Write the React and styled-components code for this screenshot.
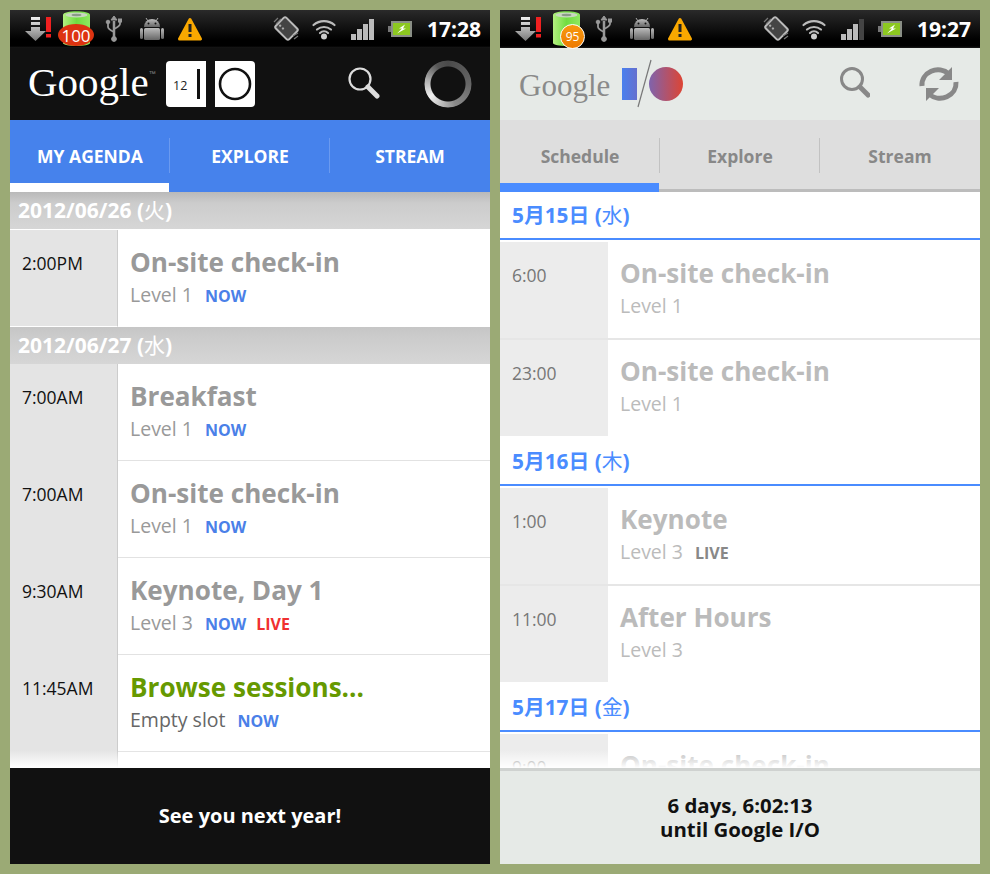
import React from 'react';
import styled, { createGlobalStyle } from 'styled-components';

const Global = createGlobalStyle`
  html, body { margin: 0; padding: 0; background: #9baa75; }
  body { font-family: "Open Sans", "Noto Sans CJK JP", sans-serif; }
`;

const Frame = styled.div`
  display: flex;
  gap: 10px;
  padding: 10px;
  width: 990px;
  height: 874px;
  box-sizing: border-box;
  overflow: hidden;
`;

const Phone = styled.div`
  width: 480px;
  height: 854px;
  flex: none;
  display: flex;
  flex-direction: column;
  background: #fff;
`;

const StatusBar = styled.div`
  height: 38px;
  flex: none;
  display: flex;
  align-items: center;
  padding: 0 9px 0 11px;
  background: linear-gradient(#2a2a2a 0, #1c1c1c 10px, #000 30px, #000 36px, #1a1a1a 38px);
`;

const IconGroup = styled.div`
  display: flex;
  margin-left: ${(p) => (p.$right ? 'auto' : '0')};
`;

const Icon = styled.svg`
  width: 38px;
  height: 38px;
  flex: none;
  display: block;
`;

const BatterySlot = styled.div`
  position: relative;
  width: 38px;
  height: 38px;
  flex: none;
`;

const BatteryBadge = styled.div`
  position: absolute;
  display: flex;
  align-items: center;
  justify-content: center;
  font-weight: 400;
  color: #fff;
  box-sizing: border-box;
  ${(p) =>
    p.$big
      ? `left: -1px; top: 14px; width: 36px; height: 22px; border-radius: 50%; background: #dd3311; font-size: 17px;`
      : `left: 11px; top: 14px; width: 25px; height: 25px; border-radius: 50%; background: linear-gradient(#f79a10, #ee7a00); border: 1.5px solid #fff; font-size: 12px;`}
`;

const Clock = styled.div`
  width: 54px;
  margin-left: 8px;
  font-size: 21px;
  font-weight: 700;
  color: #fff;
  white-space: nowrap;
  text-align: right;
`;

const ActionBar = styled.div`
  height: 72px;
  flex: none;
  display: flex;
  align-items: center;
  padding: 0 18px 0 ${(p) => (p.$light ? '19px' : '18px')};
  background: ${(p) => (p.$light ? '#e6eae7' : '#111')};
`;

const Wordmark = styled.div`
  font-family: "Liberation Serif", serif;
  font-size: ${(p) => (p.$light ? '31px' : '41px')};
  line-height: 1;
  color: ${(p) => (p.$light ? '#8a8a8a' : '#fff')};
  margin-right: ${(p) => (p.$light ? '10px' : '0')};
  position: relative;
  top: ${(p) => (p.$light ? '1px' : '-2px')};
`;

const Trademark = styled.span`
  font-family: "Liberation Sans", sans-serif;
  font-size: 7px;
  color: #888;
  vertical-align: 20px;
  margin-right: 7px;
`;

const ActionIcons = styled.div`
  margin-left: auto;
  display: flex;
  align-items: flex-start;
  gap: 68px;
`;

const ActionIcon = styled.svg`
  width: 40px;
  height: 48px;
  display: block;
  flex: none;
`;

const Spinner = styled.div`
  width: 48px;
  height: 48px;
  margin-left: -24px;
  border-radius: 50%;
  background: conic-gradient(#4a4a4a 0deg, #666 90deg, #8a8a8a 160deg, #f0f0f0 235deg, #b0b0b0 280deg, #555 330deg, #4a4a4a 360deg);
  -webkit-mask: radial-gradient(circle, transparent 17px, #000 18px, #000 23px, transparent 24px);
  mask: radial-gradient(circle, transparent 17px, #000 18px, #000 23px, transparent 24px);
`;

const RefreshBox = styled.svg`
  width: 48px;
  height: 48px;
  margin-left: -24px;
  display: block;
  flex: none;
`;

const Tabs = styled.div`
  height: 72px;
  flex: none;
  display: flex;
  box-sizing: border-box;
  background: ${(p) => (p.$light ? '#dedede' : '#4682ec')};
  ${(p) => (p.$light ? 'border-bottom: 3px solid #bcbcbc;' : '')}
`;

const Tab = styled.div`
  position: relative;
  flex: 1 1 0;
  display: flex;
  align-items: flex-start;
  justify-content: center;
  padding-top: 24px;
  font-size: 17.500px;
  line-height: 24px;
  font-weight: 700;
  color: ${(p) => (p.$light ? '#888' : '#fff')};
  &:not(:last-child)::after {
    content: '';
    position: absolute;
    right: 0;
    top: 18px;
    height: 35px;
    width: 1px;
    background: ${(p) => (p.$light ? '#c2c2c2' : '#6a9af0')};
  }
`;

const TabMarker = styled.div`
  position: absolute;
  left: 0;
  right: 1px;
  bottom: ${(p) => (p.$light ? '-3px' : '0')};
  height: 9px;
  background: ${(p) => (p.$light ? '#4a8cff' : '#fff')};
`;

const List = styled.div`
  position: relative;
  flex: 1 1 0;
  min-height: 0;
  overflow: hidden;
  background: #fff;
`;

const Fade = styled.div`
  position: absolute;
  left: 0;
  right: 0;
  bottom: 0;
  height: 18px;
  background: linear-gradient(rgba(255, 255, 255, 0), #fff);
`;

const DayBar = styled.div`
  height: 37px;
  box-sizing: border-box;
  padding-left: 8px;
  font-size: 21px;
  line-height: 37px;
  font-weight: 700;
  color: #fff;
  background: linear-gradient(${(p) => (p.$top ? '#b9b9b9' : '#c6c6c6')}, #cccccc 30%, #d6d6d6);
`;

const DayRule = styled.div`
  height: 48px;
  box-sizing: border-box;
  padding-left: 12px;
  font-size: 20.800px;
  line-height: 47px;
  font-weight: 700;
  color: #4a8cff;
  border-bottom: 2px solid #4a8cff;
  margin-bottom: 2px;
`;

const Kanji = styled.span`
  font-weight: 400;
`;

const Row = styled.div`
  display: flex;
  height: ${(p) => (p.$light ? '98px' : '97px')};
  ${(p) => (p.$first ? 'margin-top: 1px;' : '')}
`;

const TimeCell = styled.div`
  box-sizing: border-box;
  flex: none;
  width: 108px;
  padding: 21px 0 0 12px;
  font-size: 17.500px;
  line-height: 24px;
  color: ${(p) => (p.$light ? '#777' : '#111')};
  background: ${(p) => (p.$light ? '#ececec' : '#e4e4e4')};
  ${(p) => (p.$light ? 'border-bottom: 2px solid #e6e6e6;' : 'border-right: 1px solid #ccc;')}
  ${(p) => (p.$light && p.$last ? 'border-bottom-color: #fff;' : '')}
  ${(p) => (p.$first ? 'border-bottom: 1px solid #fff;' : '')}
`;

const Body = styled.div`
  flex: 1 1 0;
  box-sizing: border-box;
  padding: ${(p) => (p.$light ? '13px' : '14px')} 0 0 12px;
  border-bottom: ${(p) => (p.$light ? '2px' : '1px')} solid ${(p) => (p.$plain ? '#fff' : p.$light ? '#e6e6e6' : '#e2e2e2')};
`;

const Title = styled.div`
  font-size: 26.100px;
  line-height: 36px;
  font-weight: 700;
  white-space: nowrap;
  color: ${(p) => p.$color};
`;

const Meta = styled.div`
  display: flex;
  align-items: baseline;
  gap: 12px;
  font-size: 19.500px;
  line-height: 30px;
  color: ${(p) => p.$color};
`;

const Flag = styled.span`
  font-size: 16px;
  font-weight: 700;
  color: ${(p) => p.$color};
  & + & { margin-left: -2px; }
`;

const Footer = styled.div`
  height: 96px;
  flex: none;
  box-sizing: border-box;
  display: flex;
  align-items: center;
  justify-content: center;
  text-align: center;
  font-size: ${(p) => (p.$light ? '20.400px' : '20px')};
  line-height: 24px;
  font-weight: 700;
  color: ${(p) => (p.$light ? '#111' : '#fff')};
  background: ${(p) => (p.$light ? '#e6eae7' : '#111')};
  ${(p) => (p.$light ? 'border-top: 3px solid #cfd2d0; padding-bottom: 2px;' : '')}
`;

const Download = () => (
  <Icon viewBox="0 0 38 38">
    <defs>
      <linearGradient id="dl" x1="0" y1="0" x2="0" y2="1">
        <stop offset="0" stopColor="#eee" />
        <stop offset="1" stopColor="#777" />
      </linearGradient>
    </defs>
    <path d="M10 7h9v3h-9zM10 12h9v3h-9zM10 17h9v4h6l-10.500 10L4 21h6z" fill="url(#dl)" />
    <rect x="25" y="7" width="5" height="15" fill="#f02020" />
    <rect x="25" y="24" width="5" height="3.500" fill="#f02020" />
  </Icon>
);

const Battery = ({ children }) => (
  <BatterySlot>
    <svg width="38" height="38" viewBox="0 0 38 38">
      <defs>
        <linearGradient id="cell" x1="0" y1="0" x2="1" y2="0">
          <stop offset="0" stopColor="#b4f080" />
          <stop offset="0.5" stopColor="#70dc40" />
          <stop offset="1" stopColor="#8ee860" />
        </linearGradient>
      </defs>
      <path d="M4 5c0-5 27-5 27 0v28c0 4-27 4-27 0z" fill="url(#cell)" />
      <ellipse cx="17.500" cy="5" rx="11" ry="2.500" fill="#c8d8c0" />
      <ellipse cx="17.500" cy="5" rx="5" ry="1.200" fill="#8a9a88" />
    </svg>
    {children}
  </BatterySlot>
);

const Usb = () => (
  <Icon viewBox="0 0 38 38">
    <g fill="#999" stroke="#999">
      <path d="M17 11v18" strokeWidth="2.500" />
      <path d="M17 6l3 4h-6z" />
      <path d="M11 13v4c0 2 2 3 6 5M23 11v3c0 2-2 3-6 5" fill="none" strokeWidth="1.800" />
      <circle cx="17" cy="29" r="2.400" />
      <circle cx="11" cy="12" r="1.800" />
      <rect x="21.500" y="9" width="3" height="3" />
    </g>
  </Icon>
);

const Android = () => (
  <Icon viewBox="0 0 38 38">
    <defs>
      <linearGradient id="droid" x1="0" y1="0" x2="0" y2="1">
        <stop offset="0" stopColor="#bbb" />
        <stop offset="1" stopColor="#666" />
      </linearGradient>
    </defs>
    <g fill="url(#droid)">
      <path d="M9 17a8 8 0 0 1 16 0z" />
      <rect x="9" y="18" width="16" height="12" rx="1.500" />
      <rect x="5" y="18" width="3" height="11" rx="1.500" />
      <rect x="26" y="18" width="3" height="11" rx="1.500" />
    </g>
    <path d="M11 8l2 3M23 8l-2 3" stroke="#aaa" />
    <circle cx="13.500" cy="13.500" r="1" fill="#111" />
    <circle cx="20.500" cy="13.500" r="1" fill="#111" />
  </Icon>
);

const Warning = () => (
  <Icon viewBox="0 0 38 38">
    <path d="M17 9.500L27.500 29h-21z" fill="#f9a800" stroke="#f9a800" strokeWidth="3" strokeLinejoin="round" />
    <rect x="15.500" y="14" width="3" height="8" fill="#222" />
    <rect x="15.500" y="24" width="3" height="3" fill="#222" />
  </Icon>
);

const Rotate = () => (
  <Icon viewBox="0 0 38 38">
    <g transform="rotate(45 19.500 18.500)">
      <rect x="10" y="11" width="19" height="15" rx="2" fill="#444" stroke="#bbb" strokeWidth="2" />
      <circle cx="13" cy="21" r="1.200" fill="#aaa" />
      <circle cx="17" cy="21" r="1.200" fill="#aaa" />
    </g>
    <path d="M7 12l4-4M9 14l5-5M26 26l5-3M27 29l4-3" stroke="#777" strokeWidth="1.200" />
  </Icon>
);

const Wifi = () => (
  <Icon viewBox="0 0 38 38">
    <g fill="none" stroke="#bbb" strokeWidth="2.200" strokeLinecap="round">
      <path d="M8.500 15a16 16 0 0 1 21 0" />
      <path d="M12 19.500a11 11 0 0 1 14 0" />
      <path d="M15 23a6 6 0 0 1 8 0" />
    </g>
    <circle cx="19" cy="26.500" r="3" fill="#ccc" />
  </Icon>
);

const Signal = ({ bars }) => (
  <Icon viewBox="0 0 38 38">
    {[0, 1, 2, 3].map((i) => (
      <rect key={i} x={8 + i * 6} y={24 - i * 5} width="5" height={6 + i * 5} fill={i < bars ? '#bbb' : '#444'} />
    ))}
  </Icon>
);

const PowerCell = () => (
  <Icon viewBox="0 0 38 38">
    <rect x="7" y="16" width="3" height="6" fill="#777" />
    <rect x="10" y="11" width="21" height="16" fill="#8a8f86" />
    <rect x="12" y="13" width="17" height="12" fill="#8cc820" />
    <path d="M24 14.500l-6 4h3l-5 5 9-5h-3z" fill="#fff" />
  </Icon>
);

const Search = ({ light }) => (
  <ActionIcon viewBox="0 0 40 48">
    <circle cx={light ? 22 : 20} cy="19" r="10.500" fill="none" stroke={light ? '#888' : '#ddd'} strokeWidth={light ? 3 : 2.200} />
    <path
      d={light ? 'M30 27l8 8' : 'M28 27l9 9'}
      stroke={light ? '#888' : '#ddd'}
      strokeWidth="5"
      strokeLinecap="round"
    />
  </ActionIcon>
);

const Refresh = () => (
  <RefreshBox viewBox="0 0 48 48">
    <g fill="none" stroke="#888" strokeWidth="5">
      <path d="M8 26a16 15 0 0 1 27-12" />
      <path d="M42 22a16 15 0 0 1-27 12" />
    </g>
    <path d="M38 7v13H25zM12 41V28h13z" fill="#888" />
  </RefreshBox>
);

const LogoDark = () => (
  <svg width="92" height="48" viewBox="0 0 92 48">
    <path d="M7 1h36v46H7a4 4 0 0 1-4-4V5a4 4 0 0 1 4-4z" fill="#fff" />
    <rect x="34" y="9" width="3" height="30" fill="#111" />
    <text x="10" y="30" fontSize="12.500" fontWeight="400" fill="#222" fontFamily="Open Sans">12</text>
    <path d="M52 1h36a4 4 0 0 1 4 4v38a4 4 0 0 1-4 4H52z" fill="#fff" />
    <circle cx="72" cy="24" r="15" fill="none" stroke="#111" strokeWidth="2.600" />
  </svg>
);

const LogoLight = () => (
  <svg width="66" height="52" viewBox="0 0 66 52">
    <defs>
      <linearGradient id="io" gradientUnits="userSpaceOnUse" x1="2" y1="0" x2="64" y2="0">
        <stop offset="0" stopColor="#4a80ee" />
        <stop offset="0.35" stopColor="#7068c0" />
        <stop offset="1" stopColor="#e04430" />
      </linearGradient>
    </defs>
    <rect x="2" y="10" width="15" height="32" fill="url(#io)" />
    <path d="M31 2L18 49" stroke="#777" strokeWidth="1.200" />
    <circle cx="46" cy="26" r="17" fill="url(#io)" />
  </svg>
);

const darkDays = [
  {
    label: '2012/06/26',
    kanji: '火',
    rows: [{ time: '2:00PM', title: 'On-site check-in', meta: 'Level 1', now: true }],
  },
  {
    label: '2012/06/27',
    kanji: '水',
    rows: [
      { time: '7:00AM', title: 'Breakfast', meta: 'Level 1', now: true },
      { time: '7:00AM', title: 'On-site check-in', meta: 'Level 1', now: true },
      { time: '9:30AM', title: 'Keynote, Day 1', meta: 'Level 3', now: true, live: true },
      { time: '11:45AM', title: 'Browse sessions...', meta: 'Empty slot', now: true, browse: true },
      { time: '', title: '', meta: '' },
    ],
  },
];

const lightDays = [
  {
    label: '5月15日',
    kanji: '水',
    rows: [
      { time: '6:00', title: 'On-site check-in', meta: 'Level 1' },
      { time: '23:00', title: 'On-site check-in', meta: 'Level 1' },
    ],
  },
  {
    label: '5月16日',
    kanji: '木',
    rows: [
      { time: '1:00', title: 'Keynote', meta: 'Level 3', live: true },
      { time: '11:00', title: 'After Hours', meta: 'Level 3' },
    ],
  },
  {
    label: '5月17日',
    kanji: '金',
    rows: [{ time: '9:00', title: 'On-site check-in', meta: 'Level 1' }],
  },
];

function DarkRow({ row, first }) {
  return (
    <Row $first={first}>
      <TimeCell $first={first}>{row.time}</TimeCell>
      <Body $plain={first}>
        <Title $color={row.browse ? '#669900' : '#999'}>{row.title}</Title>
        <Meta $color={row.browse ? '#666' : '#999'}>
          {row.meta}
          {row.now && <Flag $color="#4a80e8">NOW</Flag>}
          {row.live && <Flag $color="#f03030">LIVE</Flag>}
        </Meta>
      </Body>
    </Row>
  );
}

function LightRow({ row, last }) {
  return (
    <Row $light>
      <TimeCell $light $last={last}>{row.time}</TimeCell>
      <Body $light $plain={last}>
        <Title $color="#bbb">{row.title}</Title>
        <Meta $color="#bbb">
          {row.meta}
          {row.live && <Flag $color="#888">LIVE</Flag>}
        </Meta>
      </Body>
    </Row>
  );
}

function Status({ time, bars, battery }) {
  return (
    <StatusBar>
      <IconGroup>
        <Download />
        {battery}
        <Usb />
        <Android />
        <Warning />
      </IconGroup>
      <IconGroup $right>
        <Rotate />
        <Wifi />
        <Signal bars={bars} />
        <PowerCell />
      </IconGroup>
      <Clock>{time}</Clock>
    </StatusBar>
  );
}

export default function App() {
  return (
    <>
      <Global />
      <Frame>
        <Phone>
          <Status time="17:28" bars={4} battery={<Battery><BatteryBadge $big>100</BatteryBadge></Battery>} />
          <ActionBar>
            <Wordmark>Google<Trademark>™</Trademark></Wordmark>
            <LogoDark />
            <ActionIcons>
              <Search />
              <Spinner />
            </ActionIcons>
          </ActionBar>
          <Tabs>
            <Tab>MY AGENDA<TabMarker /></Tab>
            <Tab>EXPLORE</Tab>
            <Tab>STREAM</Tab>
          </Tabs>
          <List>
            {darkDays.map((day, d) => (
              <div key={day.label}>
                <DayBar $top={d === 0}>{day.label} (<Kanji>{day.kanji}</Kanji>)</DayBar>
                {day.rows.map((row, i) => (
                  <DarkRow key={i} row={row} first={i === 0 && day.rows.length === 1} />
                ))}
              </div>
            ))}
            <Fade />
          </List>
          <Footer>See you next year!</Footer>
        </Phone>
        <Phone>
          <Status time="19:27" bars={3} battery={<Battery><BatteryBadge>95</BatteryBadge></Battery>} />
          <ActionBar $light>
            <Wordmark $light>Google</Wordmark>
            <LogoLight />
            <ActionIcons>
              <Search light />
              <Refresh />
            </ActionIcons>
          </ActionBar>
          <Tabs $light>
            <Tab $light>Schedule<TabMarker $light /></Tab>
            <Tab $light>Explore</Tab>
            <Tab $light>Stream</Tab>
          </Tabs>
          <List>
            {lightDays.map((day) => (
              <div key={day.label}>
                <DayRule>{day.label} (<Kanji>{day.kanji}</Kanji>)</DayRule>
                {day.rows.map((row, i) => (
                  <LightRow key={i} row={row} last={i === day.rows.length - 1} />
                ))}
              </div>
            ))}
            <Fade />
          </List>
          <Footer $light>6 days, 6:02:13<br />until Google I/O</Footer>
        </Phone>
      </Frame>
    </>
  );
}
